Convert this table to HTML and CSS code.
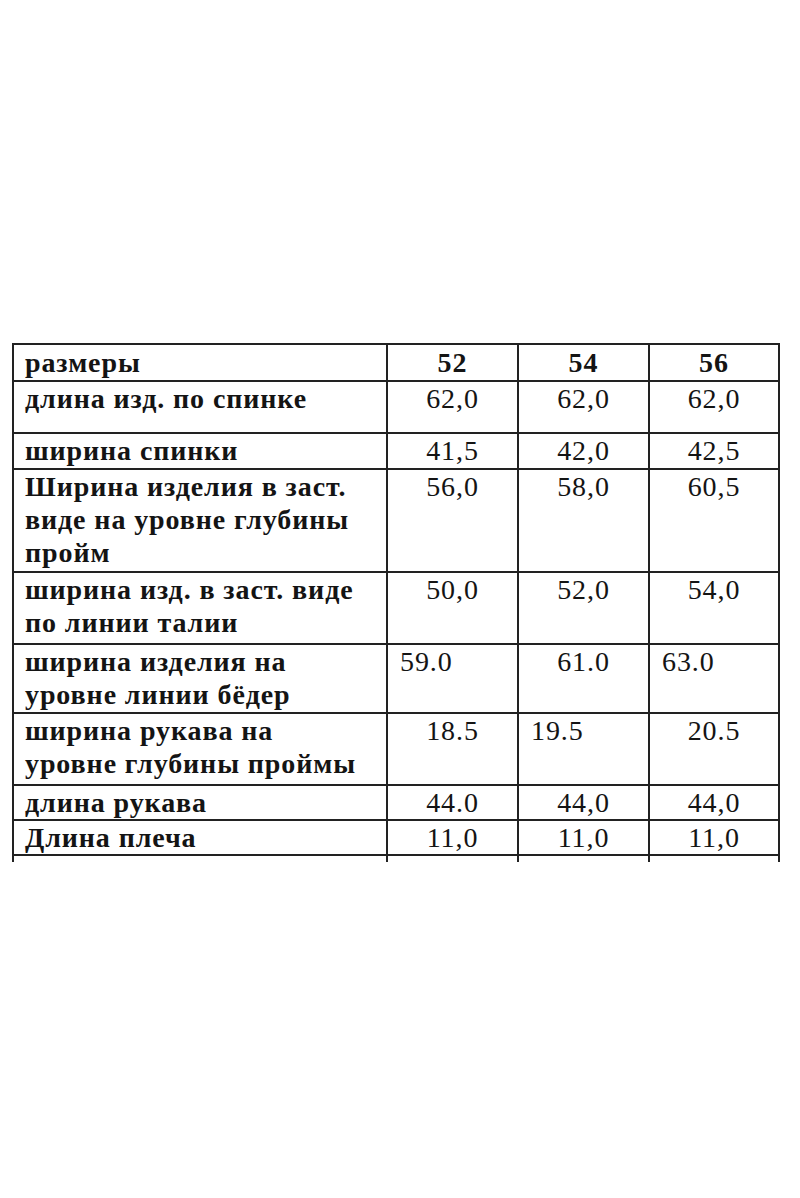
FILE: index.html
```html
<!DOCTYPE html>
<html lang="ru">
<head>
<meta charset="utf-8">
<title>Размеры</title>
<link rel="stylesheet" href="styles.css">
</head>
<body>
<table class="sizes">
  <colgroup>
    <col class="c-label">
    <col class="c-num">
    <col class="c-num">
    <col class="c-num4">
  </colgroup>
  <tr class="h-head">
    <td class="label head-cell">размеры</td>
    <td class="num head-cell bold">52</td>
    <td class="num head-cell bold">54</td>
    <td class="num head-cell bold">56</td>
  </tr>
  <tr class="h52">
    <td class="label">длина изд. по спинке</td>
    <td class="num">62,0</td>
    <td class="num">62,0</td>
    <td class="num">62,0</td>
  </tr>
  <tr class="h36">
    <td class="label">ширина спинки</td>
    <td class="num">41,5</td>
    <td class="num">42,0</td>
    <td class="num">42,5</td>
  </tr>
  <tr class="h103">
    <td class="label">Ширина изделия в заст.<br>виде на уровне глубины<br>пройм</td>
    <td class="num">56,0</td>
    <td class="num">58,0</td>
    <td class="num">60,5</td>
  </tr>
  <tr class="h72">
    <td class="label">ширина изд. в заст. виде<br>по линии талии</td>
    <td class="num">50,0</td>
    <td class="num">52,0</td>
    <td class="num">54,0</td>
  </tr>
  <tr class="h69">
    <td class="label">ширина изделия на<br>уровне линии бёдер</td>
    <td class="num left">59.0</td>
    <td class="num">61.0</td>
    <td class="num left">63.0</td>
  </tr>
  <tr class="h72">
    <td class="label">ширина рукава на<br>уровне глубины проймы</td>
    <td class="num">18.5</td>
    <td class="num left">19.5</td>
    <td class="num">20.5</td>
  </tr>
  <tr class="h35">
    <td class="label">длина рукава</td>
    <td class="num">44.0</td>
    <td class="num">44,0</td>
    <td class="num">44,0</td>
  </tr>
  <tr class="h35">
    <td class="label">Длина плеча</td>
    <td class="num">11,0</td>
    <td class="num">11,0</td>
    <td class="num">11,0</td>
  </tr>
  <tr class="h-tail">
    <td class="tail"></td>
    <td class="tail"></td>
    <td class="tail"></td>
    <td class="tail"></td>
  </tr>
</table>
</body>
</html>
```

FILE: styles.css
```css
html, body {
  margin: 0;
  padding: 0;
  background: #ffffff;
}

body {
  width: 800px;
  height: 1198px;
  font-family: "Liberation Serif", "Times New Roman", serif;
  color: #141414;
}

.sizes {
  border-collapse: collapse;
  table-layout: fixed;
  margin: 343px 0 0 12px;
  width: 766px;
}

.c-label { width: 374px; }
.c-num { width: 131px; }
.c-num4 { width: 130px; }

.sizes td {
  border: 2px solid #222222;
  padding: 0;
  vertical-align: top;
  font-size: 28px;
  line-height: 33px;
  letter-spacing: 0.9px;
  white-space: nowrap;
  overflow: hidden;
}

.sizes td.label {
  font-weight: bold;
  padding-left: 11px;
}

.sizes td.num {
  text-align: center;
  font-weight: normal;
}

.sizes td.num.left {
  text-align: left;
  padding-left: 12px;
}

.sizes td.bold {
  font-weight: bold;
}

.sizes td.head-cell {
  padding-top: 1px;
}

.sizes td.tail {
  border-bottom: none;
  height: 5px;
  line-height: 5px;
}

.h-head { height: 37px; }
.h52 { height: 52px; }
.h36 { height: 36px; }
.h103 { height: 103px; }
.h72 { height: 72px; }
.h69 { height: 69px; }
.h35 { height: 35px; }
.h-tail { height: 7px; }
```
